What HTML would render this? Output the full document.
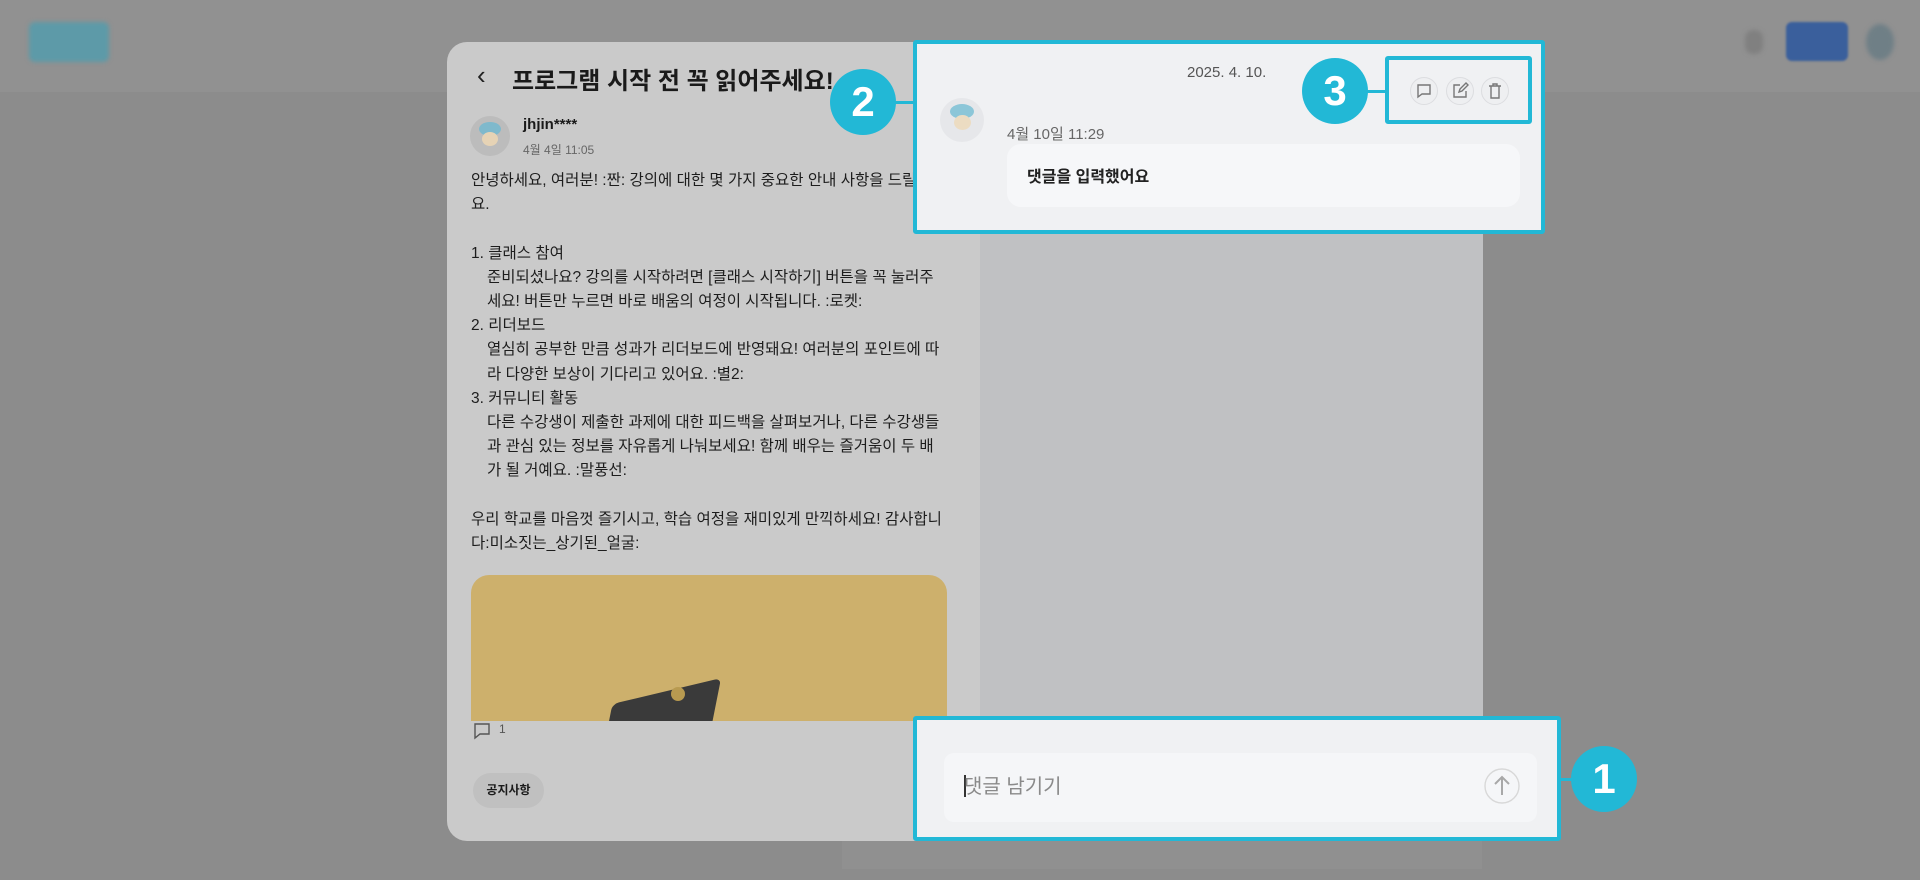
<!DOCTYPE html>
<html><head><meta charset="utf-8"><style>
*{margin:0;padding:0;box-sizing:border-box}
body{width:1920px;height:880px;background:#8c8c8c;position:relative;overflow:hidden;font-family:"Liberation Sans","Noto Sans CJK KR",sans-serif;color:#1a1a1a}
.a{position:absolute}
.topbar{left:0;top:0;width:1920px;height:92px;background:#919191}
.card{left:447px;top:42px;width:1036px;height:799px;background:#cacaca;border-radius:20px;overflow:hidden}
.rp{left:533px;top:0;width:503px;height:800px;background:#c0c1c3}
.body p{font-size:15.5px;line-height:24.2px;height:24.2px;white-space:nowrap;color:#1d1d1d}
.body p.i{padding-left:16px}
.box{border:4px solid #22b8d6;border-radius:3px;background:#f0f1f3}
.num{width:66px;height:66px;border-radius:50%;background:#22b8d6;color:#fff;font-weight:bold;font-size:42px;text-align:center;line-height:66px}
.ln{background:#22b8d6;height:3px}
.ic{width:28px;height:28px;border-radius:50%;background:#eeeff1;border:1px solid #dcdde0}
</style></head><body>
<div class="a topbar"></div>
<div class="a" style="left:29px;top:22px;width:80px;height:40px;background:#5d9aa8;border-radius:6px;filter:blur(2px)"></div>
<div class="a" style="left:1786px;top:22px;width:62px;height:39px;background:#3a5f9c;border-radius:6px;filter:blur(1px)"></div>
<div class="a" style="left:1745px;top:30px;width:18px;height:24px;background:#808080;border-radius:8px;filter:blur(2px)"></div>
<div class="a" style="left:1866px;top:24px;width:28px;height:36px;background:#6f7f86;border-radius:50%;filter:blur(2px)"></div>
<div class="a" style="left:842px;top:841px;width:640px;height:28px;background:#909090"></div>

<div class="a card">
  <div class="a rp"></div>
  <div class="a" style="left:30px;top:18px;font-size:26px;color:#222">‹</div>
  <div class="a" style="left:65px;top:19px;font-size:24px;font-weight:bold;white-space:nowrap">프로그램 시작 전 꼭 읽어주세요!</div>
  <div class="a" style="left:23px;top:74px;width:40px;height:40px;border-radius:50%;background:#bcbcbc">
    <div class="a" style="left:9px;top:6px;width:22px;height:14px;border-radius:50%;background:#7fb9cc"></div>
    <div class="a" style="left:12px;top:16px;width:16px;height:14px;border-radius:50%;background:#e6d3b5"></div>
  </div>
  <div class="a" style="left:76px;top:74px;font-size:15px;font-weight:bold">jhjin****</div>
  <div class="a" style="left:76px;top:99px;font-size:12px;color:#666">4월 4일 11:05</div>
  <div class="a body" style="left:24px;top:127px;width:460px">
    <p>안녕하세요, 여러분! :짠: 강의에 대한 몇 가지 중요한 안내 사항을 드릴게</p>
    <p>요.</p><p></p>
    <p>1. 클래스 참여</p>
    <p class="i">준비되셨나요? 강의를 시작하려면 [클래스 시작하기] 버튼을 꼭 눌러주</p>
    <p class="i">세요! 버튼만 누르면 바로 배움의 여정이 시작됩니다. :로켓:</p>
    <p>2. 리더보드</p>
    <p class="i">열심히 공부한 만큼 성과가 리더보드에 반영돼요! 여러분의 포인트에 따</p>
    <p class="i">라 다양한 보상이 기다리고 있어요. :별2:</p>
    <p>3. 커뮤니티 활동</p>
    <p class="i">다른 수강생이 제출한 과제에 대한 피드백을 살펴보거나, 다른 수강생들</p>
    <p class="i">과 관심 있는 정보를 자유롭게 나눠보세요! 함께 배우는 즐거움이 두 배</p>
    <p class="i">가 될 거예요. :말풍선:</p>
    <p></p>
    <p>우리 학교를 마음껏 즐기시고, 학습 여정을 재미있게 만끽하세요! 감사합니</p>
    <p>다:미소짓는_상기된_얼굴:</p>
  </div>
  <div class="a" style="left:24px;top:533px;width:476px;height:146px;background:#cdb06c;border-radius:18px 18px 0 0;overflow:hidden">
    <div class="a" style="left:140px;top:115px;width:100px;height:60px;background:#3a3a3a;transform:skewX(-25deg) rotate(-15deg);border-radius:6px"></div>
    <div class="a" style="left:200px;top:112px;width:14px;height:14px;border-radius:50%;background:#b89a50"></div>
  </div>
  <svg class="a" style="left:25px;top:679px" width="20" height="20" viewBox="0 0 20 20"><path d="M3 3h14v10H8l-5 4z" fill="none" stroke="#555" stroke-width="1.4"/></svg>
  <div class="a" style="left:52px;top:680px;font-size:12px;color:#555">1</div>
  <div class="a" style="left:26px;top:731px;width:71px;height:35px;border-radius:18px;background:#c0c0c0;font-size:12px;font-weight:bold;text-align:center;line-height:35px">공지사항</div>
</div>

<!-- callout 2 -->
<div class="a box" style="left:913px;top:40px;width:632px;height:194px">
  <div class="a" style="left:270px;top:20px;font-size:15px;color:#555">2025. 4. 10.</div>
  <div class="a" style="left:23px;top:54px;width:44px;height:44px;border-radius:50%;background:#e6e7ea">
    <div class="a" style="left:10px;top:6px;width:24px;height:15px;border-radius:50%;background:#8cc6d8"></div>
    <div class="a" style="left:14px;top:17px;width:17px;height:15px;border-radius:50%;background:#ecdcc2"></div>
  </div>
  <div class="a" style="left:90px;top:79px;font-size:15px;color:#666">4월 10일 11:29</div>
  <div class="a" style="left:90px;top:100px;width:513px;height:63px;border-radius:14px;background:#f6f7f9"></div>
  <div class="a" style="left:110px;top:119px;font-size:16px;font-weight:bold;color:#222">댓글을 입력했어요</div>
</div>
<div class="a ln" style="left:895px;top:101px;width:20px"></div>
<div class="a num" style="left:830px;top:69px">2</div>

<!-- callout 3 -->
<div class="a box" style="left:1385px;top:56px;width:147px;height:68px;background:#f0f1f3">
  <div class="a ic" style="left:21px;top:17px"></div>
  <div class="a ic" style="left:57px;top:17px"></div>
  <div class="a ic" style="left:92px;top:17px"></div>
  <svg class="a" style="left:26px;top:22px" width="18" height="18" viewBox="0 0 18 18"><path d="M3 3h12v9H7l-4 3z" fill="none" stroke="#777" stroke-width="1.4"/></svg>
  <svg class="a" style="left:62px;top:22px" width="18" height="18" viewBox="0 0 18 18"><path d="M9 3H3v12h12V9M8 10l1-3 6-6 2 2-6 6z" fill="none" stroke="#777" stroke-width="1.4"/></svg>
  <svg class="a" style="left:97px;top:22px" width="18" height="18" viewBox="0 0 18 18"><path d="M3 4h12M7 4V2h4v2M5 4v12h8V4" fill="none" stroke="#777" stroke-width="1.4"/></svg>
</div>
<div class="a ln" style="left:1366px;top:90px;width:21px"></div>
<div class="a num" style="left:1302px;top:58px">3</div>

<!-- callout 1 -->
<div class="a box" style="left:913px;top:716px;width:648px;height:125px">
  <div class="a" style="left:27px;top:33px;width:593px;height:69px;border-radius:10px;background:#f5f6f8"></div>
  <div class="a" style="left:47px;top:55px;width:2px;height:22px;background:#333"></div>
  <div class="a" style="left:47px;top:50px;font-size:20px;color:#8a8a8a">댓글 남기기</div>
  <svg class="a" style="left:566px;top:47px" width="38" height="38" viewBox="0 0 38 38"><circle cx="19" cy="19" r="17" fill="none" stroke="#d8d8d8" stroke-width="1.4"/><path d="M19 28V10M12 17l7-7 7 7" fill="none" stroke="#a8a8a8" stroke-width="2"/></svg>
</div>
<div class="a ln" style="left:1559px;top:778px;width:14px"></div>
<div class="a num" style="left:1571px;top:746px">1</div>
</body></html>
